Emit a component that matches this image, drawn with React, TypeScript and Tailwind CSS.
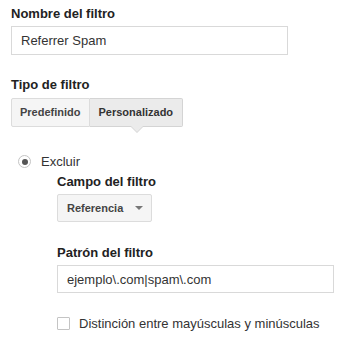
export default function App() {
  return (
    <div className="min-h-[344px] w-[346px] bg-white pl-[11px] pt-[6px] text-[13px] leading-[15px] text-[#222] [font-family:'Liberation_Sans',Arial,sans-serif]">
      {/* Nombre */}
      <div className="font-bold">Nombre del filtro</div>
      <div className="mt-[5px] flex h-[29px] w-[277px] items-center border border-[#d9d9d9] pl-[9px] text-[#333]">
        Referrer Spam
      </div>

      {/* Tipo */}
      <div className="mt-[22px] font-bold">Tipo de filtro</div>
      <div className="mt-[6px] flex h-[29px] w-fit text-[11px] font-bold text-[#444]">
        <div className="flex items-center rounded-l-[2px] border border-[#dcdcdc] bg-[#f5f5f5] px-[8px]">
          Predefinido
        </div>
        <div className="relative flex items-center rounded-r-[2px] border border-l-0 border-[#d4d4d4] bg-[#ebebeb] px-[9px] text-[#333]">
          Personalizado
          <span className="absolute left-[40px] top-full h-0 w-0 border-x-[7px] border-t-[7px] border-x-transparent border-t-[#d4d4d4]" />
          <span className="absolute left-[41px] top-full h-0 w-0 border-x-[6px] border-t-[6px] border-x-transparent border-t-[#ebebeb]" />
        </div>
      </div>

      {/* Excluir */}
      <div className="mt-[27px] flex items-center pl-[7px]">
        <span className="flex h-[13px] w-[13px] items-center justify-center rounded-full border border-[#c4c4c4] bg-white">
          <span className="h-[6px] w-[6px] rounded-full bg-[#555]" />
        </span>
        <span className="ml-[10px] text-[#333]">Excluir</span>
      </div>

      <div className="pl-[46px]">
        <div className="mt-[5px] font-bold">Campo del filtro</div>
        <div className="mt-[5px] flex h-[28px] w-[95px] items-center justify-between rounded-[2px] border border-[#dcdcdc] bg-[#f5f5f5] pl-[9px] pr-[8px] text-[11px] font-bold text-[#444]">
          Referencia
          <span className="h-0 w-0 border-x-[4px] border-t-[4px] border-x-transparent border-t-[#777]" />
        </div>

        <div className="mt-[23px] font-bold">Patrón del filtro</div>
        <div className="mt-[5px] flex h-[28px] w-[277px] items-center border border-[#d9d9d9] pl-[9px] text-[#333]">
          ejemplo\.com|spam\.com
        </div>

        <div className="mt-[23px] flex items-center">
          <span className="h-[13px] w-[13px] rounded-[1px] border border-[#c4c4c4] bg-white" />
          <span className="ml-[9px] text-[#333]">Distinción entre mayúsculas y minúsculas</span>
        </div>
      </div>
    </div>
  )
}
